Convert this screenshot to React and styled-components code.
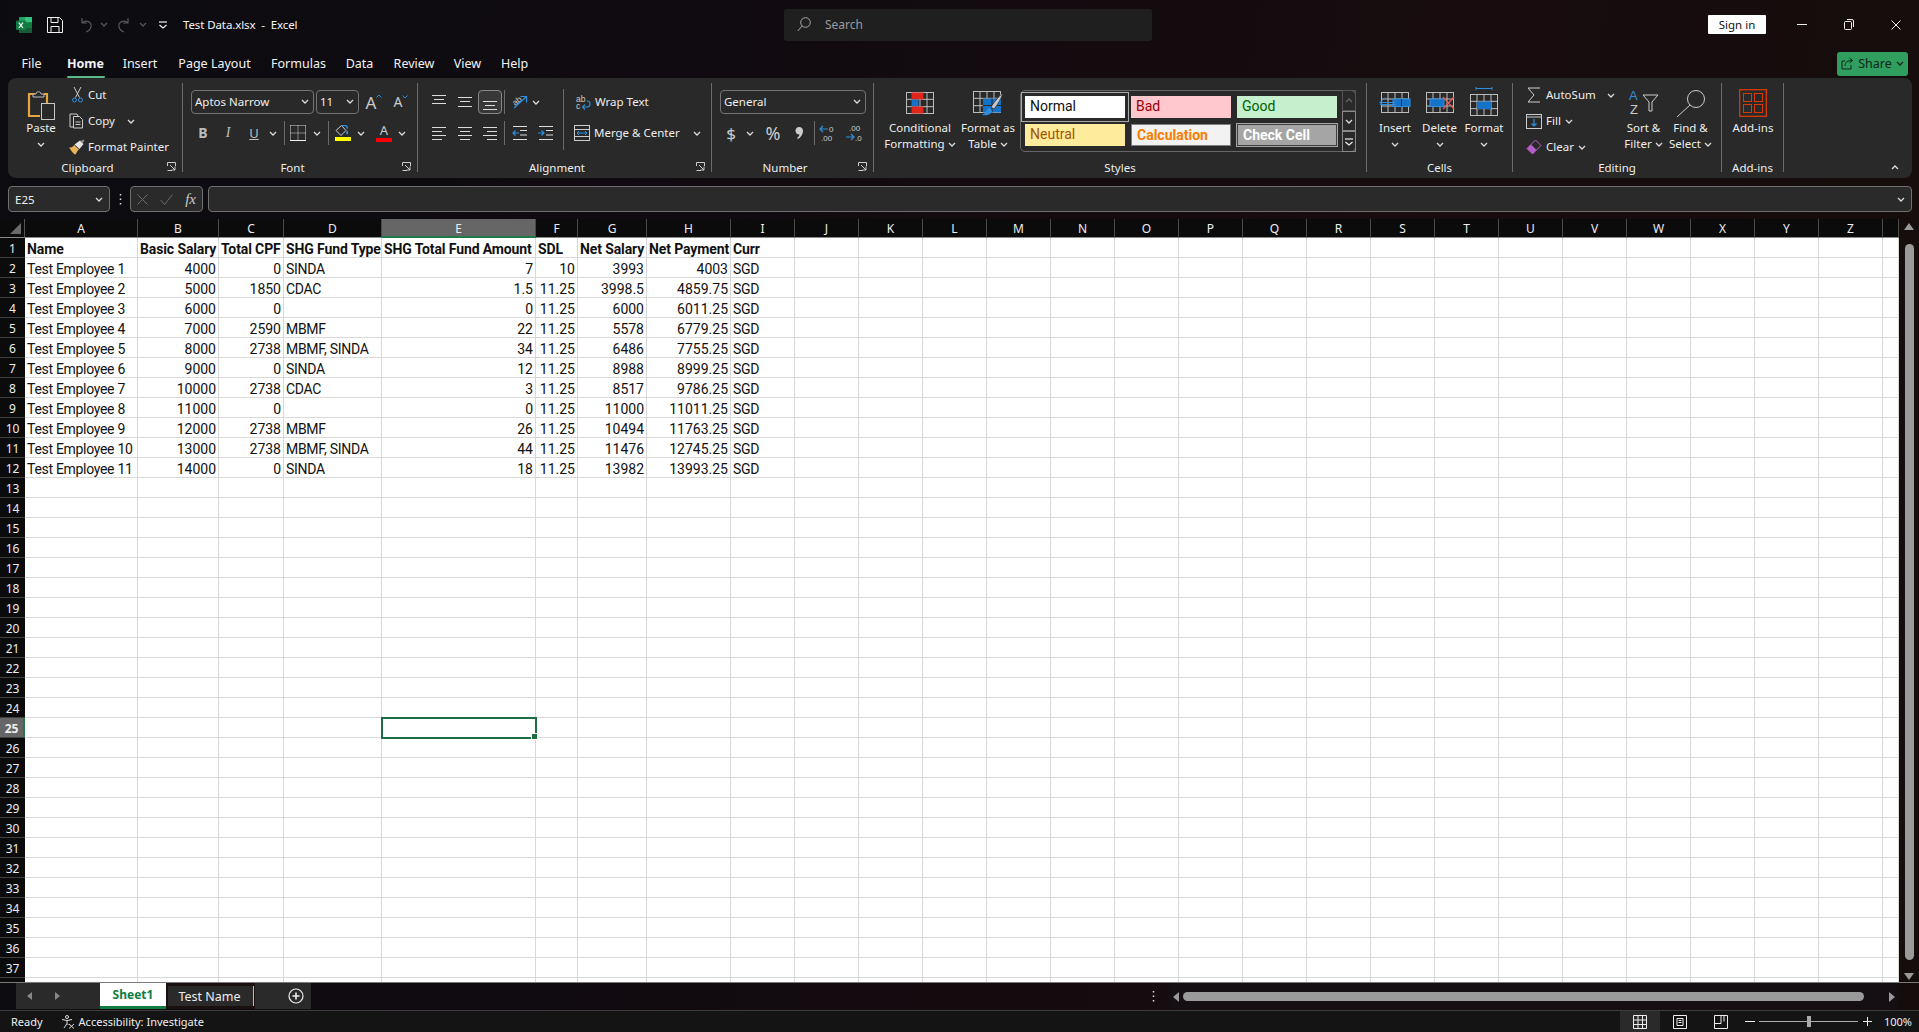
import React from 'react';
import styled, { createGlobalStyle } from 'styled-components';

const UI = '"Noto Sans", "Open Sans", sans-serif';
const CELL = '"Liberation Sans Narrow", Roboto, "Liberation Sans", sans-serif';
const INK = '#d8d8d8';
const BLUE = '#2f8fdc';

const Global = createGlobalStyle`
  html, body { margin: 0; padding: 0; background: #0c0b10; }
  * { box-sizing: border-box; }
  body { font-family: ${UI}; font-size: 12px; color: #f2f2f2; overflow: hidden; }
`;

const Page = styled.div`
  width: 1919px; height: 1032px; display: flex; flex-direction: column; overflow: hidden;
  background: linear-gradient(100deg, #0c0c10 0%, #110b10 40%, #180c0e 70%, #150d0c 100%);
`;
const TitleBar = styled.header`height: 49px; display: flex; align-items: center; flex: none;`;
const TitleLeft = styled.div`width: 784px; flex: none; display: flex; align-items: center; padding-left: 16px;`;
const QatSlot = styled.span`display: flex; align-items: center; justify-content: center; width: ${p => p.$w}px; flex: none; margin-left: ${p => p.$ml ?? 0}px;`;
const DocTitle = styled.span`margin-left: 11px; font-size: 11.5px; letter-spacing: -0.1px; color: #f5f5f5; white-space: pre; padding-bottom: 1px;`;
const SearchBox = styled.div`
  width: 368px; height: 32px; background: #1f1f1f; border-radius: 3px; flex: none;
  display: flex; align-items: center; padding-left: 13px; gap: 14px; color: #9b9b9b; font-size: 12px;
`;
const TitleRight = styled.div`flex: 1; display: flex; justify-content: flex-end; align-items: center;`;
const SignIn = styled.span`
  width: 58px; height: 19px; background: #fff; color: #111; border-radius: 1px; margin-right: 12px;
  display: flex; align-items: center; justify-content: center; font-size: 11.5px; padding-bottom: 1px;
`;
const WinBtn = styled.span`width: 47px; display: flex; justify-content: center; align-items: center;`;

const TabRow = styled.nav`height: 29px; display: flex; align-items: center; padding-left: 9px; flex: none; padding-right: 11px;`;
const TabItem = styled.span`
  width: ${p => p.$w}px; flex: none; height: 24px; display: flex; justify-content: center; position: relative;
  font-size: 12.5px; line-height: 24px; color: #f2f2f2; font-weight: ${p => (p.$active ? 700 : 400)};
`;
const TabMark = styled.i`
  position: absolute; left: 50%; bottom: -2px; width: 38px; margin-left: -19px; height: 2px; background: #5ab98a; border-radius: 1px;
`;
const ShareBtn = styled.span`
  margin-left: auto; width: 71px; height: 24px; border-radius: 3px; background: #2f9e5e; color: #10261a;
  display: flex; align-items: center; justify-content: center; gap: 4px; font-size: 12.5px;
`;

const Ribbon = styled.section`
  height: 100px; width: 1904px; margin-left: 8px; background: #292929; border-radius: 8px; flex: none;
  display: flex; padding: 5px 0 6px;
`;
const GroupBox = styled.div`
  width: ${p => p.$w}px; flex: none; height: 89px; display: flex; flex-direction: column;
  border-right: 1px solid #6a6a6a;
`;
const GroupBody = styled.div`height: 78px; display: flex; flex: none;`;
const GroupFoot = styled.div`height: 11px; display: flex; align-items: center; overflow: visible;`;
const GroupName = styled.span`flex: 1; text-align: center; font-size: 11.5px; line-height: 14px; padding-top: 2px; color: #eee; white-space: nowrap;`;
const Launcher = styled.span`width: 15px; flex: none; display: flex;`;
const Collapse = styled.span`margin-left: auto; align-self: flex-end; margin-right: 13px; margin-bottom: 2px;`;

const Stack = styled.div`
  display: flex; flex-direction: column; width: ${p => (p.$w ? `${p.$w}px` : 'auto')}; flex: none;
  padding-top: ${p => p.$top ?? 7}px; padding-left: ${p => p.$left ?? 0}px; gap: ${p => p.$gap ?? 7}px;
`;
const Line = styled.div`display: flex; align-items: center; height: 24px; flex: none;`;
const Slot = styled.span`
  width: ${p => p.$w}px; height: 24px; flex: none; display: flex; align-items: center; justify-content: center;
  color: ${p => p.$c || INK};
`;
const RowLabel = styled.span`font-size: 11.5px; color: #eee; white-space: nowrap; margin-left: ${p => p.$ml ?? 2}px; padding-bottom: 2px;`;
const RowChev = styled.span`margin-left: ${p => (p.$auto ? 'auto' : `${p.$ml ?? 4}px`)}; margin-right: ${p => p.$mr ?? 0}px; display: flex;`;
const VSep = styled.i`
  width: 1px; height: ${p => p.$h ?? 24}px; background: #6a6a6a; flex: none; margin: 0 ${p => p.$r ?? 0}px 0 ${p => p.$l ?? 0}px;
`;
const Combo = styled.div`
  width: ${p => p.$w}px; height: 24px; border: 1px solid #737373; border-radius: 4px; flex: none; margin-right: ${p => p.$mr ?? 0}px;
  display: flex; align-items: center; justify-content: space-between; padding: 0 4px 2px 3px; font-size: 11.5px; color: #eee;
`;
const Glyph = styled.span`
  font: ${p => (p.$bold ? 700 : 400)} ${p => p.$s ?? 14}px ${p => (p.$serif ? '"Liberation Serif", serif' : UI)};
  font-style: ${p => (p.$it ? 'italic' : 'normal')}; text-decoration: ${p => (p.$u ? 'underline' : 'none')};
  color: ${p => p.$c || '#bdbdbd'}; line-height: 1;
`;
const GrowA = styled.span`display: flex; align-items: flex-start; color: #ccc; font-size: ${p => p.$s}px; line-height: 1;`;
const ColorWell = styled.span`display: flex; flex-direction: column; align-items: center; gap: 1px;`;
const ColorBar = styled.i`width: 16px; height: 4px; background: ${p => p.$c}; display: block;`;
const BoxedSlot = styled(Slot)`border: 1px solid #888; border-radius: 4px; background: #383838;`;
const WrapRow = styled.div`display: flex; align-items: center; height: 24px; padding-left: ${p => p.$pl}px;`;

const Big = styled.div`
  width: ${p => p.$w}px; flex: none; display: flex; flex-direction: column; align-items: center; margin-left: ${p => p.$ml ?? 0}px;
`;
const BigIcon = styled.div`height: 37px; display: flex; align-items: center; justify-content: center; flex: none; padding-top: ${p => p.$pt ?? 3}px;`;
const BigText = styled.div`font-size: 11.5px; line-height: 16px; color: #eee; text-align: center; white-space: nowrap; display: flex; align-items: center; justify-content: center; gap: 3px; height: 16px;`;

const Gallery = styled.div`
  width: 336px; height: 62px; margin: 7px 0 0 ${p => p.$ml}px; border: 1px solid #666; border-radius: 5px; flex: none; display: flex; justify-content: space-between;
`;
const StyleGrid = styled.div`display: grid; grid-template-columns: repeat(3, 100px); grid-auto-rows: 22px; gap: 6px; padding: 5px 0 0 4px;`;
const StyleCell = styled.div`
  font-family: ${CELL}; font-size: 14px; line-height: 20px; padding-left: 5px; white-space: nowrap;
  background: ${p => p.$bg}; color: ${p => p.$c}; font-weight: ${p => (p.$bold ? 700 : 400)};
  border: ${p => p.$border || 0}; box-shadow: ${p => p.$ring || 'none'};
`;
const GalleryBtns = styled.div`width: 14px; flex: none; display: flex; flex-direction: column; margin: -1px -1px -1px 0;`;
const GalleryBtn = styled.span`
  flex: 1; border: 1px solid ${p => (p.$dim ? '#555' : '#8a8a8a')}; display: flex; align-items: center; justify-content: center;
`;

const FormulaRow = styled.div`height: 26px; margin: 8px 7px 7px 8px; display: flex; flex: none;`;
const FieldBox = styled.div`
  width: ${p => p.$w}px; flex: ${p => (p.$grow ? 1 : 'none')}; height: 26px; background: #2a2a2a; border: 1px solid #6e6e6e; border-radius: 4px;
  display: flex; align-items: center; justify-content: space-between; padding: 0 6px;
  font-size: 11.5px; color: #eee; margin-right: ${p => p.$mr ?? 0}px;
`;
const Dots = styled.span`width: 20px; flex: none; display: flex; align-items: center; justify-content: center;`;
const FxSlot = styled.span`font: italic 15px "Liberation Serif", serif; color: #ccc;`;

const Main = styled.div`height: 763px; display: flex; flex: none;`;
const Sheet = styled.div`
  width: 1899px; height: 763px; overflow: hidden; display: grid; flex: none;
  grid-template-columns: 25px ${p => p.$cols};
  grid-template-rows: 19px; grid-auto-rows: 20px; background: #fff;
`;
const Corner = styled.div`background: #0b0b0b; border-right: 1px solid #555; border-bottom: 1px solid #8a8a8a; display: flex; align-items: flex-end; justify-content: flex-end; padding: 0 3px 3px 0;`;
const ColHead = styled.div`
  background: ${p => (p.$on ? '#666' : '#0b0b0b')}; color: #eee; font-size: 12px; line-height: 19px; text-align: center;
  border-right: 1px solid #4a4a4a; border-bottom: ${p => (p.$on ? '2px solid #1f7a4a' : '1px solid #8a8a8a')};
`;
const RowHead = styled.div`
  background: ${p => (p.$on ? '#666' : '#0b0b0b')}; color: #eee; font-size: 12px; line-height: 21px; text-align: center;
  border-bottom: 1px solid #3f3f3f; border-right: ${p => (p.$on ? '2px solid #1f7a4a' : 0)}; font-weight: ${p => (p.$on ? 700 : 400)};
`;
const Cell = styled.div`
  position: relative; border-right: 1px solid #d9d9d9; border-bottom: 1px solid #d9d9d9; padding: 0 2px 0 2px;
  font-family: ${CELL}; font-size: 14px; line-height: 22px; color: #111; white-space: nowrap; min-width: 0;
  text-align: ${p => (p.$num ? 'right' : 'left')}; font-weight: ${p => (p.$bold ? 700 : 400)};
  letter-spacing: ${p => (p.$bold ? '-0.12px' : p.$num ? '0' : '-0.3px')};
  ${p => p.$sel && `
    outline: 2px solid #1f6e43; outline-offset: -1px; z-index: 2;
    &::after { content: ''; position: absolute; right: -3px; bottom: -3px; width: 5px; height: 5px; background: #1f6e43; border: 1px solid #fff; }
  `}
`;

const VScroll = styled.div`
  width: 20px; flex: none; display: flex; flex-direction: column; align-items: center; justify-content: space-between;
  padding: 4px 0 2px;
`;
const VThumb = styled.i`display: block; width: 9px; height: 716px; border-radius: 5px; background: #9a9a9a;`;

const TabsBar = styled.div`height: 28px; flex: none; display: flex; border-top: 1px solid #7a7a7a; padding-left: 16px;`;
const NavBlock = styled.div`width: 84px; background: #2a2a2a; flex: none; display: flex; align-items: center; gap: 23px; padding-left: 11px; height: 26px;`;
const ActiveSheet = styled.span`
  width: 66px; height: 26px; background: #fff; color: #107c41; font-weight: 700; font-size: 12px; flex: none;
  display: flex; align-items: center; justify-content: center; border-bottom: 3px solid #107c41;
`;
const OtherSheet = styled.span`
  width: 89px; height: 26px; padding: 3px 1px 0 2px; flex: none; display: flex; background: #1a0f0f;
`;
const OtherSheetInner = styled.span`
  flex: 1; height: 20px; background: #2a2a2a; color: #eee; font-size: 12.5px; display: flex; align-items: center; justify-content: center; border-right: 1px solid #bbb; padding-right: 2px;
`;
const AddBlock = styled.div`width: 56px; height: 26px; background: #2a2a2a; flex: none; display: flex; align-items: center; justify-content: flex-end; padding-right: 7px;`;
const BarDots = styled.span`margin-left: auto; width: 30px; display: flex; align-items: center; justify-content: center;`;
const HTrack = styled.div`width: 731px; height: 27px; flex: none; margin-right: 20px; display: flex; align-items: center; padding: 0 4px 0 5px; background: #150e12; border-radius: 8px;`;
const HThumb = styled.i`display: block; width: 681px; height: 9px; border-radius: 5px; background: #9a9a9a; margin: 0 auto 0 4px;`;

const StatusBar = styled.footer`
  height: 22px; flex: none; background: #141414; border-top: 1px solid #3c3c3c; display: flex; align-items: center; padding-left: 11px;
  font-size: 11px; color: #eee;
`;
const StatusText = styled.span`padding-bottom: 1px;`;
const Access = styled.span`display: flex; align-items: center; gap: 4px; margin-left: 18px; font-size: 11px;`;
const StatusRight = styled.div`margin-left: auto; display: flex; align-items: center; height: 100%;`;
const ViewBtn = styled.span`width: ${p => p.$w}px; height: 21px; display: flex; align-items: center; justify-content: center; background: ${p => (p.$on ? '#2a2a2a' : 'transparent')}; margin-right: ${p => p.$mr ?? 0}px;`;
const Zoomer = styled.div`width: 99px; height: 1px; background: #aaa; position: relative; margin-right: 2px;`;
const ZoomKnob = styled.i`position: absolute; left: 48px; top: -5px; width: 4px; height: 11px; background: #aaa;`;
const Pct = styled.span`width: 40px; text-align: center; font-size: 11px; padding-right: 2px;`;

/* ---------- drawings ---------- */
const Svg = ({ w, h, children }) => <svg width={w} height={h} viewBox={`0 0 ${w} ${h}`} fill="none" style={{ display: 'block', flex: 'none' }}>{children}</svg>;
const Chev = ({ c = '#dcdcdc', up }) => <Svg w={8} h={5}><path d={up ? 'M1 4l3-3 3 3' : 'M1 1l3 3 3-3'} stroke={c} strokeWidth="1.3" /></Svg>;
const ExcelLogo = () => (
  <Svg w={16} h={16}>
    <rect x="3" y="0" width="13" height="16" rx="1" fill="#21a366" />
    <rect x="9" y="0" width="7" height="5.3" fill="#33c481" />
    <rect x="9" y="5.3" width="7" height="5.4" fill="#107c41" />
    <rect x="3" y="10.7" width="13" height="5.3" fill="#185c37" />
    <rect x="0" y="3.5" width="10" height="9.5" rx="1" fill="#107c41" />
    <path d="M2.8 5.6l4.2 5.4M7 5.6l-4.2 5.4" stroke="#fff" strokeWidth="1.2" />
  </Svg>
);
const SaveIcon = () => <Svg w={16} h={16}><path d="M.5.5h12l3 3v12H.5z M4 .5v5h7v-5 M4 15.5v-6h8v6" stroke="#f2f2f2" /></Svg>;
const UndoIcon = ({ flip }) => (
  <svg width="15" height="16" viewBox="0 0 15 16" fill="none" style={{ display: 'block', transform: flip ? 'scaleX(-1)' : 'none' }}>
    <path d="M4 1v5h5M4 6c4-4 10-1 9 4-.5 2-2 4-5 5" stroke="#565656" strokeWidth="1.2" />
  </svg>
);
const QatIcon = () => <Svg w={10} h={8}><path d="M1 1h8" stroke="#eee" strokeWidth="1.2" /><path d="M1.5 4L5 7l3.5-3" stroke="#eee" strokeWidth="1.2" /></Svg>;
const SearchIcon = () => <Svg w={14} h={15}><circle cx="8.5" cy="5.5" r="4.8" stroke="#aaa" /><path d="M5 9L.8 14" stroke="#aaa" /></Svg>;
const MinIcon = () => <Svg w={10} h={1}><path d="M0 .5h10" stroke="#eee" /></Svg>;
const RestoreIcon = () => <Svg w={10} h={11}><rect x=".5" y="2.5" width="7" height="8" rx="1" stroke="#eee" /><path d="M3 .5h5a1.5 1.5 0 0 1 1.5 1.5v6" stroke="#eee" /></Svg>;
const CloseIcon = () => <Svg w={10} h={10}><path d="M.5.5l9 9M9.5.5l-9 9" stroke="#eee" /></Svg>;
const ShareIcon = () => <Svg w={13} h={13}><path d="M4 4H1v8h9V8M4 9c0-4 3-5.5 7-5.5M8.5 1l3 2.5-3 2.5" stroke="#10261a" /></Svg>;
const Launch = () => <Svg w={9} h={9}><path d="M.5 4V.5H8.5V4M.5 8.5H5" stroke="#ccc" /><path d="M3 3l5 5M8 4.5V8H4.5" stroke="#ccc" /></Svg>;

const PasteIcon = () => (
  <Svg w={28} h={30}>
    <path d="M8 4H2v22h11" stroke="#e8a33d" strokeWidth="2.2" />
    <path d="M17 4h3v9" stroke="#e8a33d" strokeWidth="2.2" />
    <path d="M6 7V4h3c0-3 5-3 5 0h3v3z" stroke="#bdbdbd" fill="#292929" />
    <rect x="14.5" y="13.5" width="13" height="16" stroke="#c8c8c8" fill="#292929" />
  </Svg>
);
const CutIcon = () => (
  <Svg w={11} h={16}>
    <path d="M2 0l5.5 10.5M9 0L3.5 10.5" stroke="#ccc" />
    <circle cx="2.5" cy="13" r="2" stroke={BLUE} /><circle cx="8.5" cy="13" r="2" stroke={BLUE} />
  </Svg>
);
const CopyIcon = () => (
  <Svg w={16} h={16}>
    <path d="M5 14H1V1h7l1 2" stroke="#ccc" />
    <path d="M4.5 3.5h6l3 3v8.5h-9z M6.5 9h5M6.5 11.5h5" stroke="#ccc" />
  </Svg>
);
const PainterIcon = () => (
  <Svg w={16} h={16}>
    <path d="M0 8.5c3 .5 4-1 5-2.5l5 4.5c-2 1-2 3-3.5 5C4 15 2 11 0 8.5z" fill="#e8b45a" />
    <path d="M5.5 5.5L11 1.5l3.5 3.5-4 5z" fill="#e6e6e6" />
    <path d="M11.5 2l3-1.5 1 1-2 3z" fill="#888" />
  </Svg>
);
const CaretUp = () => <Svg w={6} h={4}><path d="M.5 3.5L3 1l2.5 2.5" stroke={BLUE} /></Svg>;
const CaretDown = () => <Svg w={6} h={4}><path d="M.5 .5L3 3l2.5-2.5" stroke={BLUE} /></Svg>;
const BordersIcon = () => (
  <Svg w={16} h={16}>
    <path d="M.5 .5h15M.5 .5v15M15.5 .5v15M8 .5v15M.5 8h15" stroke="#ddd" strokeDasharray="1 1" />
    <path d="M0 15.5h16" stroke="#f2f2f2" />
  </Svg>
);
const FillIcon = () => (
  <Svg w={16} h={11}>
    <path d="M6.5 .5L1 5.5l5 5 5-5z" stroke="#ccc" />
    <path d="M7 1c2-1.5 6-.5 5 2.5" stroke={BLUE} strokeWidth="1.5" />
    <path d="M12 5c1 1.5 1.5 2.5 1 4-1 1-2 0-2-1z" fill={BLUE} />
  </Svg>
);
const CommaIcon = () => <Svg w={8} h={12}><path d="M4 0c2.500 0 4 1.500 4 4 0 3-2 6.500-5 8l-1-1c1.500-1 2.500-2.500 2.500-3.500C2 7.500 .5 6 .5 3.800.5 1.500 2 0 4 0z" fill="#ccc" /></Svg>;
const Lines = ({ rows, w = 16, h = 20, c = '#dcdcdc' }) => (
  <Svg w={w} h={h}>{rows.map(([a, b, y]) => <path key={`${a}-${y}`} d={`M${a} ${y}.5H${b}`} stroke={c} />)}</Svg>
);
const OrientIcon = () => (
  <Svg w={18} h={18}>
    <text x="2" y="11" fontSize="8.5" fill="#ccc" fontFamily="Liberation Sans" transform="rotate(-38 6 9)">ab</text>
    <path d="M3 15L15 4M9.5 3.5H15.5V9.5" stroke={BLUE} strokeWidth="1.2" />
  </Svg>
);
const IndentIcon = ({ inc }) => (
  <Svg w={15} h={16}>
    <path d="M1 1.5h14M8 5.5h7M8 10h7M1 14.5h14" stroke="#dcdcdc" />
    {inc ? <path d="M0 8h6M3.5 5.5L6 8l-2.5 2.5" stroke={BLUE} strokeWidth="1.2" /> : <path d="M7 8H1M3.5 5.5L1 8l2.5 2.5" stroke={BLUE} strokeWidth="1.2" />}
  </Svg>
);
const WrapIcon = () => (
  <Svg w={15} h={17}>
    <text x="0" y="8" fontSize="8.5" fill="#ccc" fontFamily="Liberation Sans">ab</text>
    <text x="0" y="15" fontSize="8.5" fill="#ccc" fontFamily="Liberation Sans">c</text>
    <path d="M7 13h4c4 0 4-6 0-6M9 10.5L6.5 13 9 15.5" stroke={BLUE} strokeWidth="1.1" />
  </Svg>
);
const MergeIcon = () => (
  <Svg w={16} h={16}>
    <rect x=".5" y=".5" width="15" height="15" stroke="#ccc" />
    <path d="M.5 4.5h15M.5 11.5h15" stroke="#ccc" />
    <path d="M3 8h10M5 6L3 8l2 2M11 6l2 2-2 2" stroke={BLUE} />
  </Svg>
);
const DecIcon = ({ inc }) => (
  <Svg w={20} h={19}>
    {inc ? <>
      <path d="M9 5H1M4 2L1 5l3 3" stroke={BLUE} strokeWidth="1.2" />
      <text x="10" y="8" fontSize="8" fill="#ccc" fontFamily="Liberation Sans">0</text>
      <text x="2" y="17" fontSize="8" fill="#ccc" fontFamily="Liberation Sans">.00</text>
    </> : <>
      <text x="4" y="7" fontSize="8" fill="#ccc" fontFamily="Liberation Sans">.00</text>
      <path d="M1 13h8M6 10l3 3-3 3" stroke={BLUE} strokeWidth="1.2" />
      <text x="10" y="17" fontSize="8" fill="#ccc" fontFamily="Liberation Sans">.0</text>
    </>}
  </Svg>
);
const GridLines = ({ x = 0, y = 0, w = 28, h = 21 }) => (
  <>
    <rect x={x + .5} y={y + .5} width={w - 1} height={h - 1} stroke="#bdbdbd" />
    <path d={`M${x} ${y + h / 3}h${w}M${x} ${y + 2 * h / 3}h${w}M${x + w / 4}  ${y}v${h}M${x + w / 2} ${y}v${h}M${x + 3 * w / 4} ${y}v${h}`} stroke="#bdbdbd" />
  </>
);
const CondIcon = () => (
  <Svg w={28} h={22}>
    <GridLines h={22} />
    <rect x="5.5" y=".5" width="12" height="7" fill="#e1251b" />
    <rect x="5.5" y="7.5" width="7" height="7" fill="#1473c8" />
    <rect x="5.5" y="14.5" width="12" height="7" fill="#e1251b" />
  </Svg>
);
const TableIcon = () => (
  <Svg w={31} h={28}>
    <GridLines h={22} />
    <rect x="10" y="7.5" width="18" height="14" fill="#1473c8" />
    <path d="M10 14.5h18M19 7.5v14" stroke="#292929" />
    <path d="M30 2c-4 3-8 8-12 14l3 2C25 13 28 8 30 2z" fill="#c9c9c9" stroke="#292929" strokeWidth=".7" />
    <path d="M17 17c-3 0-3 3-5 5-1 1-3 1.5-3 2 4 1 9 0 10-4z" fill="#2f8fdc" />
  </Svg>
);
const InsertIcon = () => (
  <Svg w={32} h={22}>
    <GridLines x={2} w={28} h={21} />
    <rect x="14" y="7" width="17" height="7.5" fill="#1473c8" stroke={BLUE} />
    <path d="M17 10.5H1M6 5.5l-5 5 5 5M1 12.5h16" stroke={BLUE} />
    <path d="M22.5 7v7.5" stroke="#292929" />
  </Svg>
);
const DeleteIcon = () => (
  <Svg w={30} h={22}>
    <GridLines x={1} w={28} h={21} />
    <rect x="5" y="7" width="14" height="7.5" fill="#1473c8" stroke={BLUE} />
    <path d="M18 5l11 12M29 5L18 17" stroke="#e35b56" strokeWidth="1.3" />
  </Svg>
);
const FormatIcon = () => (
  <Svg w={28} h={29}>
    <path d="M6 1.5h16M6 0v3M22 0v3" stroke={BLUE} />
    <g transform="translate(0 7)"><GridLines w={28} h={22} /></g>
    <rect x="7" y="14.5" width="14" height="7.5" fill="#1473c8" />
  </Svg>
);
const SigmaIcon = () => <Svg w={14} h={16}><path d="M13 1H1l6 7-6 7h12" stroke="#d0d0d0" /></Svg>;
const FillDownIcon = () => (
  <Svg w={16} h={15}><rect x=".5" y=".5" width="15" height="14" stroke="#ccc" /><path d="M.5 3h15" stroke="#ccc" /><path d="M8 5v7M5.5 9.5L8 12l2.5-2.5" stroke={BLUE} strokeWidth="1.2" /></Svg>
);
const EraserIcon = () => (
  <Svg w={16} h={16}>
    <path d="M9.5 1L15 6.5 6.5 15 1 9.5z" stroke="#b45fc8" fill="none" />
    <path d="M5 5.5l5.5 5.5-4 4L1 9.5z" fill="#b45fc8" />
  </Svg>
);
const SortIcon = () => (
  <Svg w={30} h={28}>
    <text x="0" y="11" fontSize="13" fill={BLUE} fontFamily="Liberation Sans">A</text>
    <text x="1" y="25" fontSize="13" fill="#ccc" fontFamily="Liberation Sans">Z</text>
    <path d="M14 6h15l-6 7v9h-3v-9z" stroke="#ccc" />
  </Svg>
);
const FindIcon = () => <Svg w={30} h={29}><circle cx="20" cy="10" r="8.5" stroke="#ccc" /><path d="M14 16L1 28" stroke="#ccc" /></Svg>;
const AddinIcon = () => (
  <Svg w={28} h={28}>
    <rect x=".7" y=".7" width="26.6" height="26.6" stroke="#d83b01" strokeWidth="1.3" />
    <rect x="4.5" y="4.5" width="8" height="8" stroke="#d83b01" /><rect x="15.5" y="4.5" width="8" height="8" stroke="#d83b01" />
    <rect x="4.5" y="15.5" width="8" height="8" stroke="#d83b01" /><rect x="15.5" y="15.5" width="8" height="8" stroke="#d83b01" />
  </Svg>
);
const Tri = ({ d, c = '#9a9a9a', w = 7, h = 8 }) => <Svg w={w} h={h}><path d={d} fill={c} /></Svg>;
const ThreeDots = () => <Svg w={3} h={11}><path d="M1.5 0v1.5M1.5 4.5V6M1.5 9v1.5" stroke="#ddd" strokeWidth="1.5" /></Svg>;
const PlusCircle = () => <Svg w={16} h={16}><circle cx="8" cy="8" r="7" stroke="#eee" strokeWidth="1.2" /><path d="M4.5 8h7M8 4.5v7" stroke="#eee" strokeWidth="1.6" /></Svg>;
const AccessIcon = () => (
  <Svg w={14} h={14}>
    <circle cx="6" cy="2" r="1.5" stroke="#ddd" /><path d="M1 4.5l5 1 5-1M6 5.5v3L3 13M6 8.5l1.5 1.5" stroke="#ddd" /><path d="M8 9l5 4.5M13 9l-5 4.5" stroke="#ddd" />
  </Svg>
);
const NormalView = () => <Svg w={14} h={14}><path d="M.5.5h13v13H.5zM5 .5v13M9.5 .5v13M.5 5h13M.5 9.5h13" stroke="#eee" /></Svg>;
const PageView = () => <Svg w={14} h={14}><path d="M.5.5h13v13H.5z" stroke="#eee" /><path d="M4 3.5h6v7H4zM5.5 5.5h3M5.5 7.5h3" stroke="#eee" /></Svg>;
const BreakView = () => <Svg w={14} h={14}><path d="M.5.5h13v13H.5zM.5 8.5h6.5V.5" stroke="#eee" /><path d="M10 .5v6" stroke="#eee" /></Svg>;

/* ---------- data ---------- */
const COLS = [113, 81, 65, 98, 154, 42, 69, 84, 64, ...Array(17).fill(64), 16];
const LETTERS = [...'ABCDEFGHIJKLMNOPQRSTUVWXYZ', ''];
const HEADER = ['Name', 'Basic Salary', 'Total CPF', 'SHG Fund Type', 'SHG Total Fund Amount', 'SDL', 'Net Salary', 'Net Payment', 'Curr'];
const DATA = [
  [4000, 0, 'SINDA', 7, 10, 3993, 4003],
  [5000, 1850, 'CDAC', 1.5, 11.25, 3998.5, 4859.75],
  [6000, 0, '', 0, 11.25, 6000, 6011.25],
  [7000, 2590, 'MBMF', 22, 11.25, 5578, 6779.25],
  [8000, 2738, 'MBMF, SINDA', 34, 11.25, 6486, 7755.25],
  [9000, 0, 'SINDA', 12, 11.25, 8988, 8999.25],
  [10000, 2738, 'CDAC', 3, 11.25, 8517, 9786.25],
  [11000, 0, '', 0, 11.25, 11000, 11011.25],
  [12000, 2738, 'MBMF', 26, 11.25, 10494, 11763.25],
  [13000, 2738, 'MBMF, SINDA', 44, 11.25, 11476, 12745.25],
  [14000, 0, 'SINDA', 18, 11.25, 13982, 13993.25],
].map((r, i) => [`Test Employee ${i + 1}`, ...r, 'SGD']);

const Group = ({ w, name, launch, children }) => (
  <GroupBox $w={w}>
    <GroupBody>{children}</GroupBody>
    <GroupFoot>
      <GroupName>{name}</GroupName>
      {launch && <Launcher><Launch /></Launcher>}
    </GroupFoot>
  </GroupBox>
);
const BigBtn = ({ w, ml, pt, icon, lines, chevOn = lines.length - 1, below }) => (
  <Big $w={w} $ml={ml}>
    <BigIcon $pt={pt}>{icon}</BigIcon>
    {lines.map((l, i) => <BigText key={l}>{l}{i === chevOn && !below && <Chev />}</BigText>)}
    {below && <BigText><Chev /></BigText>}
  </Big>
);

const Clipboard = () => (
  <Group w={175} name="Clipboard" launch>
    <BigBtn w={54} ml={6} lines={['Paste']} pt={6} below icon={<PasteIcon />} />
    <Stack $top={0} $gap={2}>
      <Line><Slot $w={18}><CutIcon /></Slot><RowLabel>Cut</RowLabel></Line>
      <Line><Slot $w={18}><CopyIcon /></Slot><RowLabel>Copy</RowLabel><RowChev $ml={12}><Chev /></RowChev></Line>
      <Line><Slot $w={18}><PainterIcon /></Slot><RowLabel>Format Painter</RowLabel></Line>
    </Stack>
  </Group>
);
const Font = () => (
  <Group w={235} name="Font" launch>
    <Stack $left={8}>
      <Line>
        <Combo $w={123} $mr={2}>Aptos Narrow<Chev /></Combo>
        <Combo $w={43}>11<Chev /></Combo>
        <Slot $w={30}><GrowA $s={17}>A<CaretUp /></GrowA></Slot>
        <Slot $w={24}><GrowA $s={14}>A<CaretDown /></GrowA></Slot>
      </Line>
      <Line>
        <Slot $w={24}><Glyph $bold $s={14}>B</Glyph></Slot>
        <Slot $w={26}><Glyph $it $s={14} $serif>I</Glyph></Slot>
        <Slot $w={26}><Glyph $u $s={13}>U</Glyph></Slot>
        <Slot $w={12}><Chev /></Slot>
        <VSep $l={5} $r={5} />
        <Slot $w={16}><BordersIcon /></Slot>
        <Slot $w={22}><Chev /></Slot>
        <VSep $r={5} />
        <Slot $w={18}><ColorWell><FillIcon /><ColorBar $c="#ffff00" /></ColorWell></Slot>
        <Slot $w={18}><Chev /></Slot>
        <Slot $w={28}><ColorWell><Glyph $s={13} $c="#ccc">A</Glyph><ColorBar $c="#ff0000" /></ColorWell></Slot>
        <Slot $w={8}><Chev /></Slot>
      </Line>
    </Stack>
  </Group>
);
const Alignment = () => (
  <Group w={294} name="Alignment" launch>
    <Stack $left={8} $w={145}>
      <Line>
        <Slot $w={26}><Lines rows={[[1, 15, 3], [3, 13, 7], [1, 15, 11]]} /></Slot>
        <Slot $w={26}><Lines rows={[[1, 15, 5], [3, 13, 9], [1, 15, 14]]} /></Slot>
        <BoxedSlot $w={24}><Lines rows={[[1, 15, 9], [3, 13, 13], [1, 15, 17]]} /></BoxedSlot>
        <VSep $l={2} $r={6} />
        <Slot $w={18}><OrientIcon /></Slot>
        <Slot $w={14}><Chev /></Slot>
      </Line>
      <Line>
        <Slot $w={26}><Lines rows={[[1, 15, 4], [1, 11, 8], [1, 15, 12], [1, 11, 16]]} /></Slot>
        <Slot $w={26}><Lines rows={[[1, 15, 4], [3, 13, 8], [1, 15, 12], [3, 13, 16]]} /></Slot>
        <Slot $w={24}><Lines rows={[[1, 15, 4], [5, 15, 8], [1, 15, 12], [5, 15, 16]]} /></Slot>
        <VSep $l={2} $r={7} />
        <Slot $w={15}><IndentIcon /></Slot>
        <Slot $w={11} />
        <Slot $w={15}><IndentIcon inc /></Slot>
      </Line>
    </Stack>
    <Stack $top={6} $gap={0}>
      <VSep $h={61} />
    </Stack>
    <Stack $w={148}>
      <WrapRow $pl={12}><WrapIcon /><RowLabel $ml={4}>Wrap Text</RowLabel></WrapRow>
      <WrapRow $pl={10}><MergeIcon /><RowLabel $ml={4}>Merge &amp; Center</RowLabel><RowChev $ml={13}><Chev /></RowChev></WrapRow>
    </Stack>
  </Group>
);
const NumberGroup = () => (
  <Group w={162} name="Number" launch>
    <Stack $left={8}>
      <Line><Combo $w={146}>General<Chev /></Combo></Line>
      <Line>
        <Slot $w={22}><Glyph $s={17} $c="#ccc">$</Glyph></Slot>
        <Slot $w={16}><Chev /></Slot>
        <Slot $w={30}><Glyph $s={18} $c="#ccc">%</Glyph></Slot>
        <Slot $w={22}><CommaIcon /></Slot>
        <VSep $l={4} $r={4} />
        <Slot $w={20}><DecIcon inc /></Slot>
        <Slot $w={6} />
        <Slot $w={20}><DecIcon /></Slot>
      </Line>
    </Stack>
  </Group>
);
const Styles = () => (
  <Group w={493} name="Styles">
    <BigBtn w={68} ml={12} lines={['Conditional', 'Formatting']} pt={3} icon={<CondIcon />} />
    <BigBtn w={68} lines={['Format as', 'Table']} pt={6} icon={<TableIcon />} />
    <Gallery $ml={-2}>
      <StyleGrid>
        <StyleCell $bg="#fff" $c="#111" $ring="0 0 0 3px #292929, 0 0 0 4px #aaa">Normal</StyleCell>
        <StyleCell $bg="#ffc7ce" $c="#9c0006">Bad</StyleCell>
        <StyleCell $bg="#c6efce" $c="#006100">Good</StyleCell>
        <StyleCell $bg="#ffeb9c" $c="#9c5700">Neutral</StyleCell>
        <StyleCell $bg="#f2f2f2" $c="#fa7d00" $bold $border="1px solid #7f7f7f">Calculation</StyleCell>
        <StyleCell $bg="#a5a5a5" $c="#fff" $bold $border="1px solid #3f3f3f" $ring="0 0 0 1px #a5a5a5">Check Cell</StyleCell>
      </StyleGrid>
      <GalleryBtns>
        <GalleryBtn $dim><Chev c="#666" up /></GalleryBtn>
        <GalleryBtn><Chev /></GalleryBtn>
        <GalleryBtn><QatIcon /></GalleryBtn>
      </GalleryBtns>
    </Gallery>
  </Group>
);
const Cells = () => (
  <Group w={146} name="Cells">
    <BigBtn w={46} ml={5} lines={['Insert']} below icon={<InsertIcon />} />
    <BigBtn w={43} lines={['Delete']} below icon={<DeleteIcon />} />
    <BigBtn w={46} lines={['Format']} below pt={0} icon={<FormatIcon />} />
  </Group>
);
const Editing = () => (
  <Group w={209} name="Editing">
    <Stack $w={107} $left={12} $top={0} $gap={2}>
      <Line><Slot $w={18}><SigmaIcon /></Slot><RowLabel $ml={3}>AutoSum</RowLabel><RowChev $auto $mr={5}><Chev /></RowChev></Line>
      <Line><Slot $w={18}><FillDownIcon /></Slot><RowLabel $ml={3}>Fill</RowLabel><RowChev><Chev /></RowChev></Line>
      <Line><Slot $w={18}><EraserIcon /></Slot><RowLabel $ml={3}>Clear</RowLabel><RowChev><Chev /></RowChev></Line>
    </Stack>
    <BigBtn w={47} lines={['Sort &', 'Filter']} icon={<SortIcon />} />
    <BigBtn w={47} lines={['Find &', 'Select']} icon={<FindIcon />} />
  </Group>
);
const Addins = () => (
  <Group w={62} name="Add-ins">
    <BigBtn w={62} lines={['Add-ins']} chevOn={-1} icon={<AddinIcon />} />
  </Group>
);

export default function App() {
  const rows = [];
  for (let r = 1; r <= 38; r += 1) {
    const on = r === 25;
    rows.push(<RowHead key={`h${r}`} $on={on}>{r === 38 ? '' : r}</RowHead>);
    COLS.forEach((_, c) => {
      let v = '';
      if (r === 1 && c < 9) v = HEADER[c];
      else if (r >= 2 && r <= 12 && c < 9) v = DATA[r - 2][c];
      const num = typeof v === 'number';
      rows.push(<Cell key={`${r}-${c}`} $num={num} $bold={r === 1} $sel={on && c === 4}>{v}</Cell>);
    });
  }
  return (
    <Page>
      <Global />
      <TitleBar>
        <TitleLeft>
          <ExcelLogo />
          <QatSlot $w={46}><SaveIcon /></QatSlot>
          <QatSlot $w={15}><UndoIcon /></QatSlot>
          <QatSlot $w={22}><Chev c="#565656" /></QatSlot>
          <QatSlot $w={15} $ml={2}><UndoIcon flip /></QatSlot>
          <QatSlot $w={22}><Chev c="#565656" /></QatSlot>
          <QatSlot $w={18}><QatIcon /></QatSlot>
          <DocTitle>{'Test Data.xlsx  -  Excel'}</DocTitle>
        </TitleLeft>
        <SearchBox><SearchIcon />Search</SearchBox>
        <TitleRight>
          <SignIn>Sign in</SignIn>
          <WinBtn><MinIcon /></WinBtn>
          <WinBtn><RestoreIcon /></WinBtn>
          <WinBtn><CloseIcon /></WinBtn>
        </TitleRight>
      </TitleBar>
      <TabRow>
        {[['File', 45], ['Home', 63, true], ['Insert', 46], ['Page Layout', 103], ['Formulas', 65], ['Data', 57], ['Review', 52], ['View', 55], ['Help', 39]].map(([t, w, a]) => (
          <TabItem key={t} $w={w} $active={a}>{t}{a && <TabMark />}</TabItem>
        ))}
        <ShareBtn><ShareIcon />Share<Chev c="#10261a" /></ShareBtn>
      </TabRow>
      <Ribbon>
        <Clipboard /><Font /><Alignment /><NumberGroup /><Styles /><Cells /><Editing /><Addins />
        <Collapse><Chev c="#ddd" up /></Collapse>
      </Ribbon>
      <FormulaRow>
        <FieldBox $w={102}>E25<Chev /></FieldBox>
        <Dots><ThreeDots /></Dots>
        <FieldBox $w={73} $mr={5}>
          <Svg w={11} h={11}><path d="M.5.5l10 10M10.5.5l-10 10" stroke="#6a6a6a" /></Svg>
          <Svg w={13} h={11}><path d="M.5 6l4 4.5L12.5.5" stroke="#6a6a6a" /></Svg>
          <FxSlot>fx</FxSlot>
        </FieldBox>
        <FieldBox $grow><span /><Chev /></FieldBox>
      </FormulaRow>
      <Main>
        <Sheet $cols={COLS.map(w => `${w}px`).join(' ')}>
          <Corner><Tri d="M11 0v11H0z" c="#6a6a6a" w={11} h={11} /></Corner>
          {LETTERS.map(l => <ColHead key={l || 'end'} $on={l === 'E'}>{l}</ColHead>)}
          {rows}
        </Sheet>
        <VScroll>
          <Tri d="M0 7L5 0l5 7z" w={10} h={7} />
          <VThumb />
          <Tri d="M0 0h10L5 7z" w={10} h={7} />
        </VScroll>
      </Main>
      <TabsBar>
        <NavBlock>
          <Tri d="M5 0v8L0 4z" c="#888" w={5} h={8} />
          <Tri d="M0 0v8l5-4z" c="#888" w={5} h={8} />
        </NavBlock>
        <ActiveSheet>Sheet1</ActiveSheet>
        <OtherSheet><OtherSheetInner>Test Name</OtherSheetInner></OtherSheet>
        <AddBlock><PlusCircle /></AddBlock>
        <BarDots><ThreeDots /></BarDots>
        <HTrack>
          <Tri d="M6 0v10L0 5z" w={6} h={10} />
          <HThumb />
          <Tri d="M0 0v10l6-5z" w={6} h={10} />
        </HTrack>
      </TabsBar>
      <StatusBar>
        <StatusText>Ready</StatusText>
        <Access><AccessIcon /><StatusText>Accessibility: Investigate</StatusText></Access>
        <StatusRight>
          <ViewBtn $w={40} $on><NormalView /></ViewBtn>
          <ViewBtn $w={40}><PageView /></ViewBtn>
          <ViewBtn $w={41}><BreakView /></ViewBtn>
          <ViewBtn $w={18}><MinIcon /></ViewBtn>
          <Zoomer><ZoomKnob /></Zoomer>
          <ViewBtn $w={14} $mr={5}><Svg w={9} h={9}><path d="M0 4.5h9M4.5 0v9" stroke="#eee" /></Svg></ViewBtn>
          <Pct>100%</Pct>
        </StatusRight>
      </StatusBar>
    </Page>
  );
}
